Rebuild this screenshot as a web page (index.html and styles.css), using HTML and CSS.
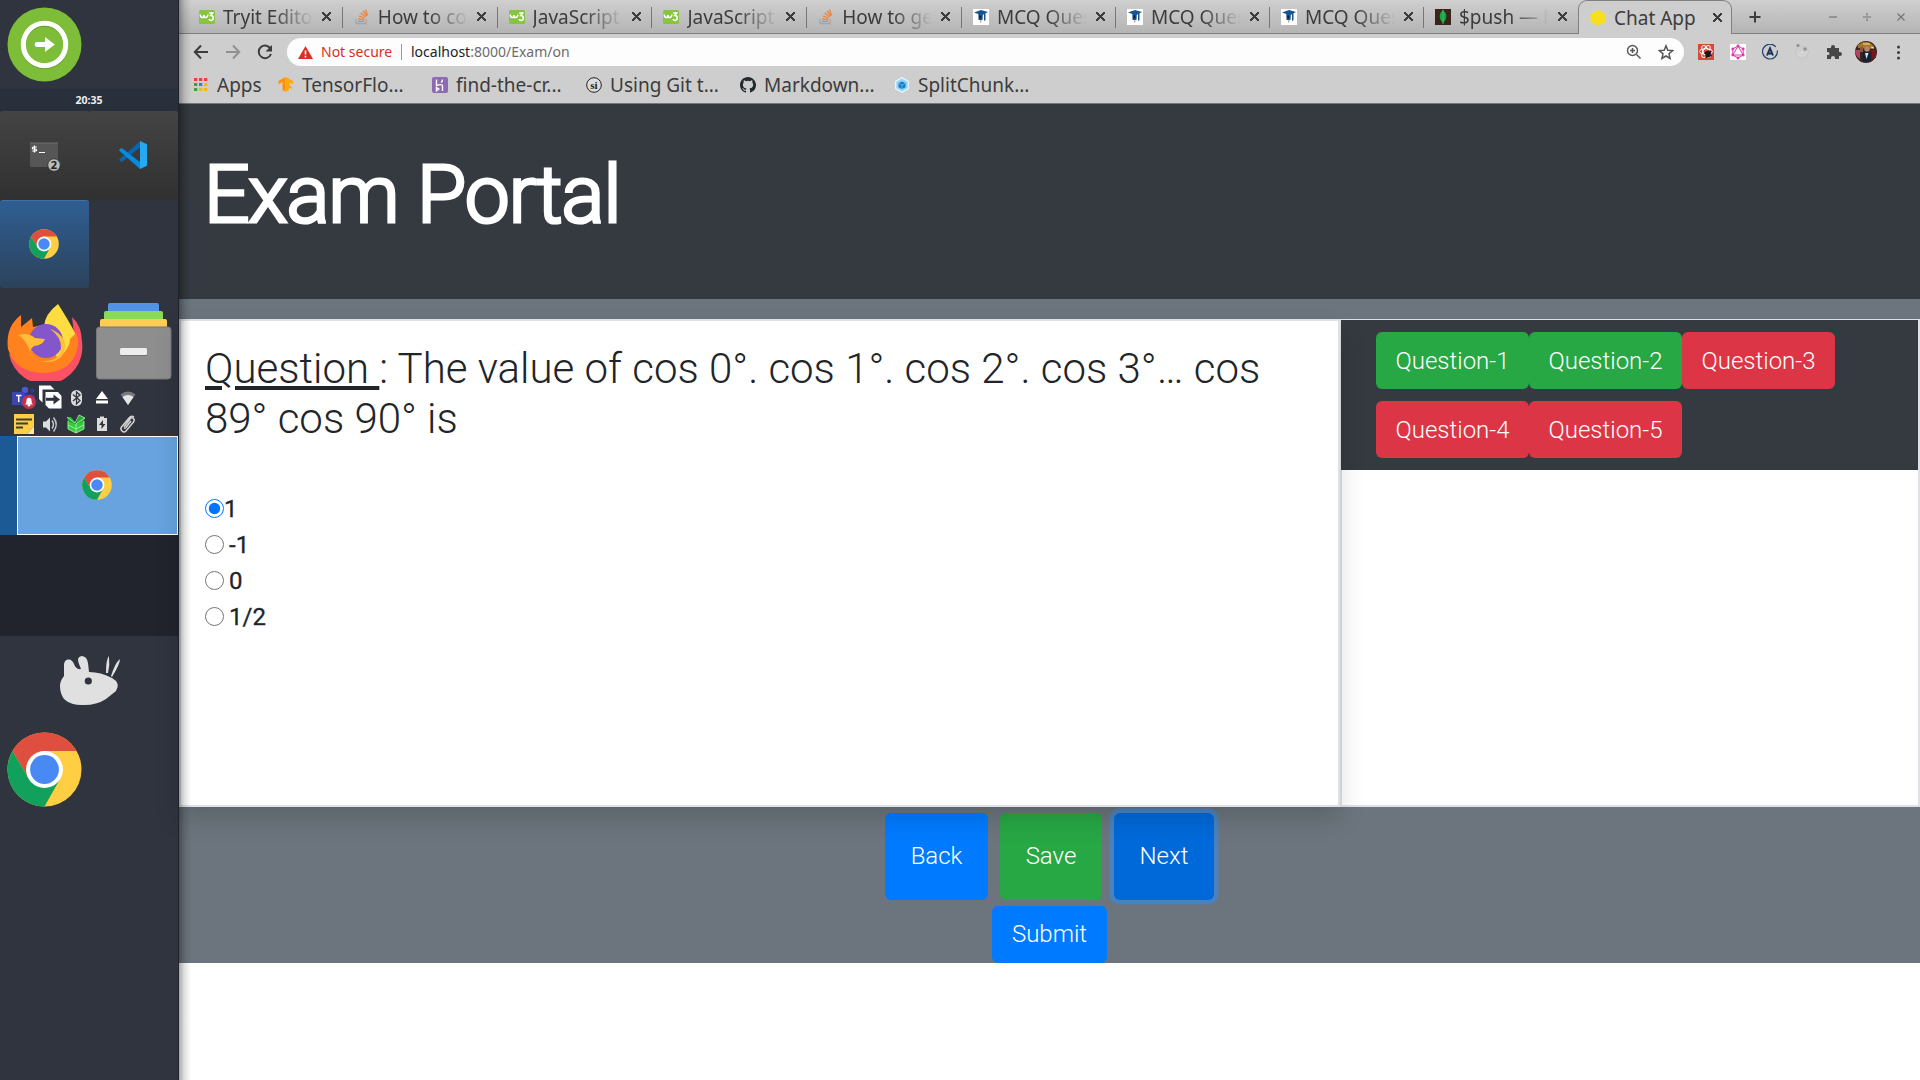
FILE: index.html
```html
<!DOCTYPE html>
<html lang="en">
<head>
<meta charset="utf-8">
<title>Chat App</title>
<link rel="stylesheet" href="styles.css">
</head>
<body>
<svg class="defs" aria-hidden="true">
  <symbol id="chrome" viewBox="0 0 76 76">
    <circle cx="38" cy="38" r="37.5" fill="#ffce43"/>
    <path d="M5.5 19.2A37.5 37.5 0 0 1 70.5 19.2H38L22 47Z" fill="#de4f3f"/>
    <path d="M5.5 19.2A37.5 37.5 0 0 0 38 75.5L54 47H22Z" fill="#11a15d"/>
    <circle cx="38" cy="38" r="18.7" fill="#fff"/><circle cx="38" cy="38" r="14.6" fill="#4889f4"/>
  </symbol>
  <symbol id="w3" viewBox="0 0 16 14"><rect width="16" height="14" rx="1.5" fill="#86c540"/><path d="M1.3 4.5q0 3 1.8 3t1.8-2.6q0 2.6 1.8 2.6T9 4.5M10.2 3h3.5l-2 2.6q2.6 0 2.6 2.4t-2.3 2.4q-1.4 0-2.1-1.2" fill="none" stroke="#fff" stroke-width="1.5"/></symbol>
  <symbol id="so" viewBox="0 0 16 16"><path d="M2 10v4.5h10V10" fill="none" stroke="#a5a5a5" stroke-width="1.3"/><path d="M4 12.3h6.2M4 9.8l6.2.8M4.8 7l6 2M6.5 4.2l5.3 3.6M9 2l4 5M11.5.5l2 6" stroke="#ef8236" stroke-width="1.3"/></symbol>
  <symbol id="mcq" viewBox="0 0 16 16"><path fill="#fff" d="M0 0h16v16H0z"/><path d="M1 3.5 8 1l7 2-2.5 1.3V11L11 12V5.5H9.8L9.5 11h-4L5.3 5Z" fill="#175591"/><path d="M6.3 6.5h2v3H6.3z" fill="#09243d"/><path d="M7 11.5h1.5L7.8 14Z" fill="#b0523d"/></symbol>
</svg>
<div class="desktop">
  <aside class="dock">
    <div class="menu"><svg width="75" height="75" viewBox="0 0 76 76"><circle cx="38" cy="38" r="37.5" fill="#7ebd37"/><circle cx="38" cy="39" r="21.5" fill="none" stroke="#679f2b" stroke-width="5"/><circle cx="38" cy="38" r="21.5" fill="none" stroke="#fff" stroke-width="5.2"/><path d="M30.5 38H40" stroke="#fff" stroke-width="5" stroke-linecap="round"/><path d="M38.5 30.3 48.5 38l-10 7.7Z" fill="#fff"/></svg></div>
    <div class="clock">20:35</div>
    <div class="tasks">
      <div class="task"><svg width="32" height="30" viewBox="0 0 32 30"><rect width="28" height="24" y="1" rx="1" fill="#565656"/><path d="M0 1h28" stroke="#707070"/><path d="M6.8 5H3.5q-1.2 0-1.2 1t1.3 1h1.7q1.3 0 1.3 1t-1.2 1H2.2M4.5 3.5v7M9 10.5h6" stroke="#fff" stroke-width="1.2" fill="none"/><circle cx="24" cy="23" r="6.3" fill="#bcbcbc" stroke="#333"/><text x="24" y="26.7" text-anchor="middle" class="count">2</text></svg></div>
      <div class="task code"><svg width="28" height="28" viewBox="0 0 28 28"><path d="M0 9.3 2.4 7l4 2.8L21 22v5.7Z" fill="#0b8ad8"/><path d="M0 18.8 2.4 21l4-2.8L21 6.5V.2Z" fill="#0766ad"/><path d="M0 9.3 2.4 7 21 21v6.7Z" fill="#078bdc"/><path d="M21 0l7 3.3v21.4L21 28Z" fill="#25a9f3"/></svg></div>
      <div class="task active"><svg width="30" height="30"><use href="#chrome"/></svg></div>
    </div>
    <div class="launchers">
      <svg width="76" height="78" viewBox="0 0 76 78"><path d="M65 14q10 9 10 25A37 37 0 0 1 2 51q36 15 66-12Z" fill="#fa5163"/><path d="M14 12v12l11-9 1 9q18-5 31 3l13 5q4 13-6 25-11 14-28 13Q8 69 1 46-2 24 14 12Z" fill="#ff821e"/><path d="M51 1q-13 10-14 22-1 12 8 20l9 21q19-11 14-34Q62 18 51 1Z" fill="#ffdd40"/><path d="M14 50q10 14 30 8 18-7 19-22l6-6q6 20-9 33-14 9-30 5Q12 62 5 48Z" fill="#ff821e"/><circle cx="39" cy="38" r="17" fill="#8356c9"/><path d="M43 26q16 6 15 19-2 14-19 14-16-1-17-14-5-10-11-13 10-3 17 3l10 1q-2 6-11 7-5 4-4 8 5 8 15 7 14 0 16-12 1-12-11-20Z" fill="#ffbd3b"/></svg>
      <svg width="76" height="77" viewBox="0 0 76 77"><rect x="12" width="51" height="14" rx="2" fill="#5294e2"/><rect x="8" y="8" width="59" height="14" rx="2" fill="#87db58"/><rect x="4" y="16" width="67" height="14" rx="2" fill="#ffcc55"/><rect x=".5" y="24" width="74.5" height="52" rx="3" fill="#8e8e8e" stroke="#777"/><rect x="24" y="46" width="27" height="7" rx="1.5" fill="#717171"/><rect x="24" y="45" width="27" height="7" rx="1.5" fill="#ededed"/></svg>
    </div>
    <div class="tray">
      <svg viewBox="0 0 26 26"><circle cx="14" cy="5" r="3.3" fill="#5059c9"/><circle cx="21.5" cy="5.5" r="2.3" fill="#323998"/><rect x="9" y="9" width="15" height="12" rx="3" fill="#323998"/><rect x="1" y="7" width="13" height="13" rx="1" fill="#3b45b0"/><path d="M5 10.5h5.5M7.7 10.5V17" stroke="#fff" stroke-width="1.5"/><circle cx="18" cy="17" r="7" fill="#c4314b"/><path d="M14 19.5q1.5-1 1.5-4 0-2.7 2.5-2.7t2.5 2.7q0 3 1.5 4Z" fill="#fff"/><circle cx="18" cy="20.3" r="1.3" fill="#fff"/></svg>
      <svg viewBox="0 0 26 26"><path d="M2 .5h11.5l4 4H5.5v13L2 14Z" fill="#fff"/><path d="M8.5 7H21l3.5 4v12.5H12L8.5 20Z" fill="#fff"/><path d="M9 14.3h9" stroke="#2f343f" stroke-width="3"/><path d="m16.5 9.5 6.5 5-6.5 5Z" fill="#2f343f"/></svg>
      <svg viewBox="0 0 26 26"><rect x="8" y="5" width="11" height="16" rx="5.5" fill="#dcdcdc"/><path d="m10 9.500 7 6-3.500 3.500V7l3.500 3-7 6" fill="none" stroke="#2f343f" stroke-width="1.3"/></svg>
      <svg viewBox="0 0 26 26"><path d="m13 6 6 8H7Z" fill="#fff"/><path d="M7 15.5h12v3H7z" fill="#fff"/></svg>
      <svg viewBox="0 0 26 26"><path d="M5.5 9.5q7.5-6 15 0L13 20Z" fill="#777b82"/><path d="M7.5 12q5.5-4 11 0L13 20Z" fill="#e6e6e6"/></svg>
      <svg viewBox="0 0 26 26"><path d="M3 3h20v12l-7 8H3Z" fill="#ffce43"/><path d="M23 15v8h-7Z" fill="#ffe89b"/><path d="M5 8.5h16M5 12.5h12M5 16.5h7" stroke="#3d3d3d" stroke-width="1.8"/></svg>
      <svg viewBox="0 0 26 26"><path d="M6 10.5h3l4-4v14l-4-4H6Z" fill="#dcdcdc"/><path d="M15 9.5q3 4 0 8M16.5 6.5q5.5 7 0 14" fill="none" stroke="#c7c7c7" stroke-width="1.5"/></svg>
      <svg viewBox="0 0 26 26"><path d="m5 10 8 3v9l-8-4ZM21 10l-8 3v9l8-4Z" fill="#34cc3c"/><path d="m4 6 4 0 5 6 3-8 6 3-2 4-7 2-8-3Z" fill="#25ad35"/><path d="m4 6 8 6 4-8 6 3-9 6v9M5 14l8 4 8-4M5 10v8l8 4 8-4v-8" fill="none" stroke="#b4f5b4" stroke-width=".8"/></svg>
      <svg viewBox="0 0 26 26"><path d="M8 7h3V5.5h4V7h3v13H8Z" fill="#dcdcdc"/><path d="m14 9-4 5h2.5v4l4-5H14Z" fill="#2f343f"/></svg>
      <svg viewBox="0 0 26 26"><path d="m9 16 6-8q2-2 3.5-.5t0 3.5l-7.5 9q-2 2-4 0t-.5-4l7.5-9q2.5-3 5-1M9.5 16.5q0 1.5 1.5 0l5-6.5" fill="none" stroke="#d2d2d2" stroke-width="1.5"/></svg>
    </div>
    <div class="pager"><div class="desk"><svg width="30" height="30"><use href="#chrome"/></svg></div></div>
    <div class="pager-rest"></div>
    <svg class="mouse" width="62" height="52" viewBox="0 0 62 52"><path d="M4 20V8q1-5 5-4.5 3 0 5 4.5 2 6 7 5Q18 6 18 4q0-3.5 4-4 5 .5 6 7l1 9q12 0 23 6 9 5 4 13l-10 8q-9 6-22 6Q0 50 0 30q0-5 4-10Z" fill="#e0e0e0"/><path d="M46 17q0-14 3-17 1 9-1 17ZM51 20q4-13 9-17 0 5-8 18Z" fill="#e0e0e0"/><circle cx="28.3" cy="25" r="3.6" fill="#2f343f"/></svg>
    <svg class="big-chrome" width="75" height="75"><use href="#chrome"/></svg>
  </aside>

  <main class="window">
    <nav class="tabs">
      <div class="tab wide"><svg class="fav"><use href="#w3"/></svg><span class="title">Tryit Editor</span><i class="x"></i></div>
      <div class="tab wide"><svg class="fav"><use href="#so"/></svg><span class="title">How to con</span><i class="x"></i></div>
      <div class="tab wide"><svg class="fav"><use href="#w3"/></svg><span class="title">JavaScript</span><i class="x"></i></div>
      <div class="tab wide"><svg class="fav"><use href="#w3"/></svg><span class="title">JavaScript</span><i class="x"></i></div>
      <div class="tab wide"><svg class="fav"><use href="#so"/></svg><span class="title">How to get</span><i class="x"></i></div>
      <div class="tab"><svg class="fav"><use href="#mcq"/></svg><span class="title">MCQ Quest</span><i class="x"></i></div>
      <div class="tab"><svg class="fav"><use href="#mcq"/></svg><span class="title">MCQ Quest</span><i class="x"></i></div>
      <div class="tab"><svg class="fav"><use href="#mcq"/></svg><span class="title">MCQ Quest</span><i class="x"></i></div>
      <div class="tab last"><svg class="fav" viewBox="0 0 16 16"><path fill="#3a2318" d="M0 0h16v16H0z"/><path d="M8 1q7 6 0 13Q1 7 8 1Z" fill="#10a64b"/><path d="M8 1v14" stroke="#5bb54b"/></svg><span class="title">$push — M</span><i class="x"></i></div>
      <div class="tab current"><svg class="fav" viewBox="0 0 16 16"><path d="m8 0 7.500 4v8L8 16 .5 12V4Z" fill="#f7df1e"/></svg><span class="title full">Chat App</span><i class="x"></i></div>
      <svg class="plus" width="14" height="14" viewBox="0 0 14 14"><path d="M7 1.5v11M1.5 7h11" stroke="#3c3c3c" stroke-width="2"/></svg>
      <div class="controls"><svg viewBox="0 0 10 10"><path d="M1 5h8"/></svg><svg viewBox="0 0 10 10"><path d="M1 5h8M5 1v2.5M5 6.5V9"/></svg><svg viewBox="0 0 10 10"><path d="m1.500 1.500 7 7M8.500 1.500l-7 7"/></svg></div>
    </nav>
    <div class="toolbar">
      <svg viewBox="0 0 16 16"><path d="M15 8H2M8 1.5 1.8 8 8 14.5" fill="none" stroke="#3c3c3c" stroke-width="2"/></svg>
      <svg viewBox="0 0 16 16"><path d="M1 8h13M8 1.5 14.2 8 8 14.5" fill="none" stroke="#909090" stroke-width="2"/></svg>
      <svg viewBox="0 0 16 16"><path d="M13.7 5A6.3 6.3 0 1 0 14 10" fill="none" stroke="#3c3c3c" stroke-width="2"/><path d="M15 1v6.5H8.5Z" fill="#3c3c3c"/></svg>
      <div class="omnibox">
        <svg class="warn" width="15" height="13" viewBox="0 0 15 13"><path d="M7.5 0 15 13H0Z" fill="#d93025"/><path d="M7.5 4.5V8.5M7.5 9.8v1.6" stroke="#fff" stroke-width="1.6"/></svg>
        <span class="insecure">Not secure</span><span class="url">localhost<span>:8000/Exam/on</span></span>
        <svg class="zoom" viewBox="0 0 16 16"><path d="M10.5 10.5 14.5 14.5M6.5 4v5M4 6.5h5" stroke="#555" stroke-width="1.5"/><circle cx="6.5" cy="6.5" r="5" fill="none" stroke="#555" stroke-width="1.4"/></svg>
        <svg viewBox="0 0 16 16"><path d="m8 1.8 1.8 4.4 4.9.4-3.7 3.2 1.1 4.7L8 12l-4.100 2.500L5 9.800 1.300 6.600l4.900-.4Z" fill="none" stroke="#555" stroke-width="1.5"/></svg>
      </div>
      <svg viewBox="0 0 16 16"><path fill="#d9483b" d="M0 0h16v16H0z"/><g fill="none" stroke="#fff" stroke-width="1"><ellipse cx="8" cy="7.5" rx="6.5" ry="2.8"/><ellipse cx="8" cy="7.5" rx="6.5" ry="2.8" transform="rotate(60 8 7.5)"/><ellipse cx="8" cy="7.5" rx="6.5" ry="2.8" transform="rotate(120 8 7.5)"/></g><path d="m7 8 4-2 2 3-1 4-4 1Z" fill="#171717"/><path d="m6 9 8 3M8 14l5-7M7 12l6-1" stroke="#171717"/></svg>
      <svg viewBox="0 0 16 16"><path fill="#fff" d="M0 0h16v16H0z"/><path d="m8 2 5.200 3v6L8 14l-5.200-3V5ZM8 2l5.200 9H2.800Z" fill="none" stroke="#e535ab"/><g fill="#e535ab"><circle cx="8" cy="2" r="1.4"/><circle cx="13.2" cy="5" r="1.4"/><circle cx="13.2" cy="11" r="1.4"/><circle cx="8" cy="14" r="1.4"/><circle cx="2.8" cy="11" r="1.4"/><circle cx="2.8" cy="5" r="1.4"/></g></svg>
      <svg viewBox="0 0 16 16"><path d="M13.8 3A7.4 7.4 0 1 0 15.3 6.5" fill="none" stroke="#22416b" stroke-width="1.2"/><path d="M5 11.5 8 4.300l3 7.200M6.200 9.500h3.600" fill="none" stroke="#17335d" stroke-width="1.9"/></svg>
      <svg viewBox="0 0 16 16"><circle cx="8" cy="8.5" r="6.5" fill="none" stroke="#c2c2c2" stroke-width=".7"/><path d="M4 8a4 4 0 0 0 8 0" fill="none" stroke="#dadada" stroke-width="1.2"/><circle cx="8" cy="8.5" r="1.5" fill="#dadada"/><circle cx="4" cy="1.5" r="1.6" fill="#949494"/><circle cx="11" cy="5" r="1.8" fill="#949494"/></svg>
      <svg viewBox="0 0 16 16"><path d="M1 4h4V3q0-2 2-2t2 2v1h4v4h1q2 0 2 2t-2 2h-1v3H9v-1q0-2-2-2t-2 2v1H1v-4h1q1.5 0 1.5-1.5T2 8H1Z" fill="#474747"/></svg>
      <svg class="avatar" viewBox="0 0 22 22"><circle cx="11" cy="11" r="11" fill="#3a2524"/><path d="M3 4q8-7 16 1v3L3 7Z" fill="#a47729"/><path d="M0 9h5v9q-5-3-5-9Z" fill="#ba405b"/><path d="M17 9h4v8h-4Z" fill="#7a1718"/><path d="m7 12 4-3 5 4v7l-8 1Z" fill="#172235"/><circle cx="12" cy="8" r="2.7" fill="#b68565"/><path d="m10 12 1.500 6 2-6Z" fill="#dce4ed"/><path d="M5 6h3v5H5Z" fill="#8b5940"/><path d="M8 3h7M16 6l3 1" stroke="#ffe5a3"/></svg>
      <svg viewBox="0 0 16 16"><g fill="#3c3c3c"><circle cx="8.5" cy="3" r="1.5"/><circle cx="8.5" cy="8.5" r="1.5"/><circle cx="8.5" cy="14" r="1.5"/></g></svg>
    </div>
    <div class="bookmarks">
      <div class="bm apps"><svg viewBox="0 0 16 16"><path d="M1 1h3.3v3H1zM6 1h3.3v3H6zM11 1h3.3v3H11z" fill="#ea4335"/><path d="M1 6h3.3v3H1zM1 11h3.3v3H1z" fill="#34a05a"/><path d="M6 6h3.3v3H6z" fill="#2f7df0"/><path d="M11 6h3.3v3H11zM6 11h3.3v3H6zM11 11h3.3v3H11z" fill="#fbb50b"/></svg>Apps</div>
      <div class="bm"><svg viewBox="0 0 16 16"><path d="M7.5 0v15L4.5 13V5L.5 7.3V4Z" fill="#ff8f00"/><path d="M8 0l7 4v3.5l-3.3-2v3l2 1V12l-2.7-1.5V13L8 15Z" fill="#ffa70f"/></svg>TensorFlo...</div>
      <div class="bm"><svg viewBox="0 0 16 16"><rect width="16" height="16" rx="2" fill="#8e6ab5"/><path d="M4.5 2.5v6q6-2 6 .5v5M10.5 2.5q0 2-1.5 3M4.5 10.5v3.3L6.8 12Z" fill="none" stroke="#fff" stroke-width="1.4"/></svg>find-the-cr...</div>
      <div class="bm"><svg viewBox="0 0 16 16"><circle cx="8" cy="8" r="7.3" fill="#ddd" stroke="#222"/><text x="8" y="12" text-anchor="middle" class="si">si</text></svg>Using Git t...</div>
      <div class="bm"><svg viewBox="0 0 16 16"><path fill="#24292e" d="M8 0C3.580 0 0 3.580 0 8c0 3.540 2.290 6.530 5.470 7.590.4.070.550-.17.550-.38v-1.490c-2.230.48-2.700-.95-2.700-.95-.36-.93-.89-1.170-.89-1.170-.73-.5.060-.49.060-.49.800.060 1.230.830 1.230.830.710 1.230 1.870.870 2.330.670.070-.52.280-.88.500-1.080-1.780-.2-3.640-.89-3.640-3.950 0-.87.310-1.590.820-2.150-.08-.2-.36-1.020.080-2.120 0 0 .67-.21 2.200.82a7.600 7.600 0 0 1 4 0c1.530-1.040 2.200-.82 2.200-.82.440 1.100.160 1.920.080 2.120.510.560.820 1.270.820 2.150 0 3.070-1.870 3.750-3.650 3.950.290.250.540.730.540 1.480v2.200c0 .210.150.460.550.380A8 8 0 0 0 8 0Z"/></svg>Markdown...</div>
      <div class="bm"><svg viewBox="0 0 16 16"><path d="m8 0 7 4v8l-7 4-7-4V4Z" fill="#e7f5fc"/><path d="m8 1.500 5.700 3.200v6.600L8 14.500l-5.700-3.200V4.700Z" fill="#8ed6fb"/><path d="m8 4.500 3.500 1.800v3.900L8 12l-3.500-1.800V6.300Z" fill="#1c78c0"/><path d="m5 6.500 3 1.700 3-1.700M8 8.200v3.500" fill="none" stroke="#8ed6fb" stroke-width=".6"/></svg>SplitChunk...</div>
    </div>

    <div class="page">
      <header><h1>Exam Portal</h1></header>
      <section class="exam">
        <article class="card">
          <h3><u>Question </u>: The value of cos 0°. cos 1°. cos 2°. cos 3°… cos 89° cos 90° is</h3>
          <div class="options">
            <label class="tight"><input type="radio" name="answer" checked>1</label>
            <label><input type="radio" name="answer">-1</label>
            <label><input type="radio" name="answer">0</label>
            <label><input type="radio" name="answer">1/2</label>
          </div>
        </article>
        <aside class="list">
          <div class="numbers">
            <button class="btn green">Question-1</button><button class="btn green">Question-2</button><button class="btn red">Question-3</button><button class="btn red">Question-4</button><button class="btn red">Question-5</button>
          </div>
        </aside>
      </section>
      <footer>
        <div class="actions"><button class="btn blue back">Back</button><button class="btn green save">Save</button><button class="btn next">Next</button></div>
        <button class="btn blue submit">Submit</button>
      </footer>
    </div>
    <div class="edge-shadow"></div>
  </main>
</div>
</body>
</html>
```

FILE: styles.css
```css
* { box-sizing: border-box; }
body { margin: 0; background: #fff; overflow: hidden; font-family: Roboto, sans-serif; }
svg { display: block; flex: none; }
.defs { position: absolute; width: 0; height: 0; }
.desktop { display: flex; width: 1920px; height: 1080px; }

/* desktop dock */
.dock { width: 179px; display: flex; flex-direction: column; background: #2f343f; border-right: 1px solid #20232b; flex: none; }
.menu { height: 89px; padding: 7px 0 0 7px; }
.clock { height: 22px; background: #2a303b; color: #eee; font: bold 10.5px/22px "Noto Sans", sans-serif; text-align: center; }
.tasks { display: grid; grid-template-columns: 89px 89px; grid-auto-rows: 89px; height: 192px; }
.task { display: flex; align-items: center; justify-content: center; padding: 2px 0 0 2px; background: linear-gradient(#444, #303030); border-radius: 3px; }
.task.code { padding: 0 2px 2px 0; }
.task.active { height: 88px; padding: 0 2px 1px 0; background: linear-gradient(#2f5e93, #2c425b); border-top: 1px solid #426fa0; }
.count { font: bold 11px "Noto Sans", sans-serif; fill: #222; }
.launchers { display: flex; justify-content: space-between; height: 82px; padding: 0 6px 0 7px; }
.tray { display: grid; grid-template-columns: repeat(5, 26px); grid-auto-rows: 26px; height: 51px; padding-left: 11px; }
.pager { height: 99px; padding-left: 17px; background: #1c5a96; }
.desk { height: 99px; display: flex; align-items: center; justify-content: center; padding: 0 2px 2px 0; border: 1px solid #fff; background: #68a3e0; }
.pager-rest { height: 101px; background: #21242d; }
.mouse { margin: 20px 0 0 60px; }
.big-chrome { margin: 24px 0 0 7px; }

/* browser window */
.window { position: relative; width: 1741px; height: 1080px; background: #fff; }
.edge-shadow { position: absolute; z-index: 3; top: 0; left: 0; width: 12px; height: 1080px; background: linear-gradient(90deg, rgba(0,0,0,.34), rgba(0,0,0,.12) 45%, transparent); }
.tabs { display: flex; align-items: center; height: 34px; padding-left: 9px; background: linear-gradient(#cfcfcf, #b4b4b4); border-bottom: 1px solid #808080; }
.tab { position: relative; display: flex; align-items: center; width: 154px; height: 33px; padding-left: 11px; color: #3c3c3c; flex: none; }
.tab.wide { width: 154.8px; }
.tab:not(.last):not(.current)::after { content: ""; position: absolute; right: 0; top: 7px; width: 1px; height: 21px; background: #777; }
.fav { width: 16px; height: 16px; }
.title { width: 92px; margin-left: 8px; overflow: hidden; white-space: nowrap; font: 19px/26px "Noto Sans", sans-serif; -webkit-mask-image: linear-gradient(90deg, #000 55%, transparent 98%); }
.title.full { -webkit-mask-image: none; }
.x { width: 9px; height: 9px; margin-left: 7px; background: linear-gradient(45deg, transparent 43%, #3c3c3c 44% 56%, transparent 57%), linear-gradient(-45deg, transparent 43%, #3c3c3c 44% 56%, transparent 57%); }
.tab.current { height: 34px; padding-left: 11px; align-self: flex-start; background: #cecece; border: 1px solid #808080; border-bottom: 0; border-radius: 9px 9px 0 0; }
.plus { margin-left: 16px; }
.controls { display: flex; gap: 24px; margin-left: auto; padding-right: 14px; }
.controls svg { width: 10px; height: 10px; fill: none; stroke: #737373; stroke-width: 1.2; }
.toolbar { display: flex; align-items: center; gap: 16px; height: 32px; padding: 4px 14px 0; background: #cecece; }
.toolbar > svg { width: 16px; height: 16px; }
.toolbar > .avatar { width: 22px; height: 22px; margin: 0 -3px; }
.omnibox { width: 1397px; height: 28px; margin: 0 -2px; display: flex; align-items: center; padding: 0 10px 0 11px; border-radius: 14px; background: #fdfdfd; font: 14px/28px "Noto Sans", sans-serif; }
.omnibox svg { width: 16px; height: 16px; }
.omnibox .warn { width: 15px; height: 13px; }
.insecure { width: 81px; margin-left: 8px; color: #d93025; line-height: 16px; border-right: 1px solid #999; white-space: nowrap; }
.url { margin-left: 9px; color: #222; }
.url span { color: #6c6c6c; }
.omnibox .zoom { margin: 0 16px 0 auto; }
.bookmarks { display: flex; align-items: center; height: 38px; padding-left: 14px; background: #cecece; border-bottom: 1px solid #777; }
.bm { display: flex; align-items: center; gap: 8px; width: 154px; font: 19px/26px "Noto Sans", sans-serif; color: #3c3c3c; white-space: nowrap; }
.bm.apps { width: 85px; }
.bm svg { width: 16px; height: 16px; }
.si { font: bold 11px "Liberation Serif", serif; fill: #222; }

/* exam page */
.page { color: #212529; }
header { height: 195px; padding: 41px 25px 0; background: #343a40; }
h1 { margin: 0; color: #fff; font-size: 80px; line-height: 100px; font-weight: 300; letter-spacing: -.95px; -webkit-text-stroke: 3.2px #fff; }
.exam { display: flex; height: 508px; padding-top: 20px; background: #6c757d; }
.card { position: relative; z-index: 1; width: 1161px; padding: 23px 24px 0 24px; background: #fff; border: 2px solid #dee2e6; box-shadow: 0 12px 24px rgba(0,0,0,.15); }
h3 { margin: 0; font-size: 42px; line-height: 50.4px; font-weight: 300; }
.options { display: flex; flex-direction: column; margin-top: 46px; -webkit-text-stroke: .3px #212529; }
.options label { display: flex; align-items: center; gap: 5px; height: 36px; font-size: 24px; line-height: 36px; }
.options .tight { gap: 0; }
.options input { width: 19px; height: 19px; margin: 0; accent-color: #0075ff; }
.list { width: 580px; background: #fff; border: 2px solid #dee2e6; }
.numbers { display: flex; flex-wrap: wrap; align-content: flex-start; gap: 12px 0; width: 577px; height: 150px; margin: -1px 0 0 -1px; padding: 12px 60px 0 35px; background: #343a40; }
.btn { display: block; padding: 0; border: 0; border-radius: 6px; color: #fff; font: 300 24px/36px Roboto, sans-serif; }
.numbers .btn { width: 153px; height: 57px; }
.green { background: #28a745; }
.red { background: #dc3545; }
.blue { background: #007bff; }
footer { height: 156px; padding-top: 6px; background: #6c757d; }
.actions { display: flex; gap: 12px; padding-left: 706px; }
.actions .btn { height: 87px; padding-bottom: 2px; }
.back { width: 103px; }
.save { width: 102px; }
.next { width: 100px; background: #0069d9; box-shadow: 0 0 0 4.5px rgba(38,143,255,.5); }
.submit { width: 115px; height: 57px; margin: 6px 0 0 813px; padding-bottom: 2px; }
```
